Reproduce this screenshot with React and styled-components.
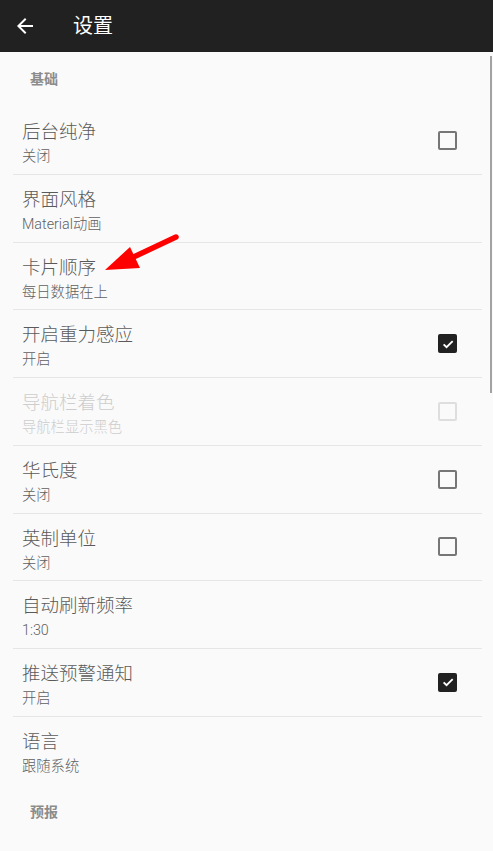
import React from "react";
import styled, { createGlobalStyle } from "styled-components";

const settings = [
    { section: "基础" },
    { title: "后台纯净", sub: "关闭", check: "off" },
    { title: "界面风格", sub: "Material动画" },
    { title: "卡片顺序", sub: "每日数据在上", arrow: true },
    { title: "开启重力感应", sub: "开启", check: "on" },
    { title: "导航栏着色", sub: "导航栏显示黑色", check: "off", disabled: true },
    { title: "华氏度", sub: "关闭", check: "off" },
    { title: "英制单位", sub: "关闭", check: "off" },
    { title: "自动刷新频率", sub: "1:30" },
    { title: "推送预警通知", sub: "开启", check: "on" },
    { title: "语言", sub: "跟随系统", last: true },
    { section: "预报" },
];

const App = () => {
    return (
        <>
            <GlobalStyle />
            <Page>
                <TopBar>
                    <BackBtn>
                        <svg width="24" height="24" viewBox="0 0 24 24" fill="#fff">
                            <path d="M20 11H7.83l5.59-5.59L12 4l-8 8 8 8 1.41-1.41L7.83 13H20v-2z" />
                        </svg>
                    </BackBtn>
                    <Title>设置</Title>
                </TopBar>

                <List>
                    {settings.map((item, i) =>
                        item.section ? (
                            <SectionHead key={i}>{item.section}</SectionHead>
                        ) : (
                            <Row key={i} $last={item.last}>
                                <TextCol>
                                    <RowTitle $disabled={item.disabled}>{item.title}</RowTitle>
                                    <RowSub $disabled={item.disabled}>{item.sub}</RowSub>
                                </TextCol>
                                {item.check && (
                                    <CheckBox $on={item.check === "on"} $disabled={item.disabled}>
                                        {item.check === "on" && (
                                            <svg width="14" height="14" viewBox="0 0 24 24">
                                                <path
                                                    d="M4.5 12.5l5 5L20 7"
                                                    stroke="#fff"
                                                    strokeWidth="3.2"
                                                    fill="none"
                                                />
                                            </svg>
                                        )}
                                    </CheckBox>
                                )}
                                {item.arrow && (
                                    <Pointer width="80" height="40" viewBox="0 0 80 40">
                                        <line
                                            x1="75" y1="4" x2="22" y2="29"
                                            stroke="#f00" strokeWidth="5.5" strokeLinecap="round"
                                        />
                                        <polygon points="4,37 29,14 39,35" fill="#f00" />
                                    </Pointer>
                                )}
                            </Row>
                        )
                    )}
                </List>
                <ScrollThumb />
            </Page>
        </>
    );
};

const GlobalStyle = createGlobalStyle`
  body {
    margin: 0;
    background: #fafafa;
    font-family: Roboto, "Noto Sans CJK SC", sans-serif;
  }
`;

const Page = styled.div`
  position: relative;
  width: 493px;
  height: 851px;
  overflow: hidden;
  background: #fafafa;
`;

const TopBar = styled.div`
  height: 52px;
  background: #212121;
  display: flex;
  align-items: center;
`;

const BackBtn = styled.div`
  width: 24px;
  height: 24px;
  margin-left: 13px;
  display: flex;
`;

const Title = styled.div`
  margin-left: 36px;
  color: #fff;
  font-size: 20px;
  line-height: 24px;
`;

const List = styled.div`
  padding: 0 11px 0 13px;
`;

const SectionHead = styled.div`
  height: 55px;
  padding: 17px 0 0 17px;
  box-sizing: border-box;
  font-size: 14px;
  line-height: 20px;
  font-weight: 700;
  color: #8c8c8c;
`;

const Row = styled.div`
  position: relative;
  height: 67.75px;
  box-sizing: border-box;
  display: flex;
  align-items: center;
  padding: 0 25px 0 9px;
  border-bottom: ${(p) => (p.$last ? "none" : "1px solid #e6e6e6")};
`;

const TextCol = styled.div`
  flex: 1;
  display: flex;
  flex-direction: column;
  align-self: flex-start;
  padding-top: 13px;
`;

const RowTitle = styled.div`
  font-size: 18.5px;
  line-height: 24px;
  font-weight: 300;
  color: ${(p) => (p.$disabled ? "#cdcdcd" : "#5a5a5a")};
`;

const RowSub = styled.div`
  margin-top: 2px;
  font-size: 14.3px;
  line-height: 20px;
  font-weight: 300;
  color: ${(p) => (p.$disabled ? "#cdcdcd" : "#5f5f5f")};
`;

const CheckBox = styled.div`
  width: 19px;
  height: 19px;
  box-sizing: border-box;
  border-radius: 2px;
  border: 2px solid ${(p) => (p.$disabled ? "#dedede" : p.$on ? "#212121" : "#767676")};
  background: ${(p) => (p.$on ? "#212121" : "transparent")};
  display: flex;
  align-items: center;
  justify-content: center;
`;

const Pointer = styled.svg`
  position: absolute;
  left: 88px;
  top: -10px;
`;

const ScrollThumb = styled.div`
  position: absolute;
  right: 1px;
  top: 56px;
  width: 2px;
  height: 337px;
  background: #a3a3a3;
`;

export default App;
